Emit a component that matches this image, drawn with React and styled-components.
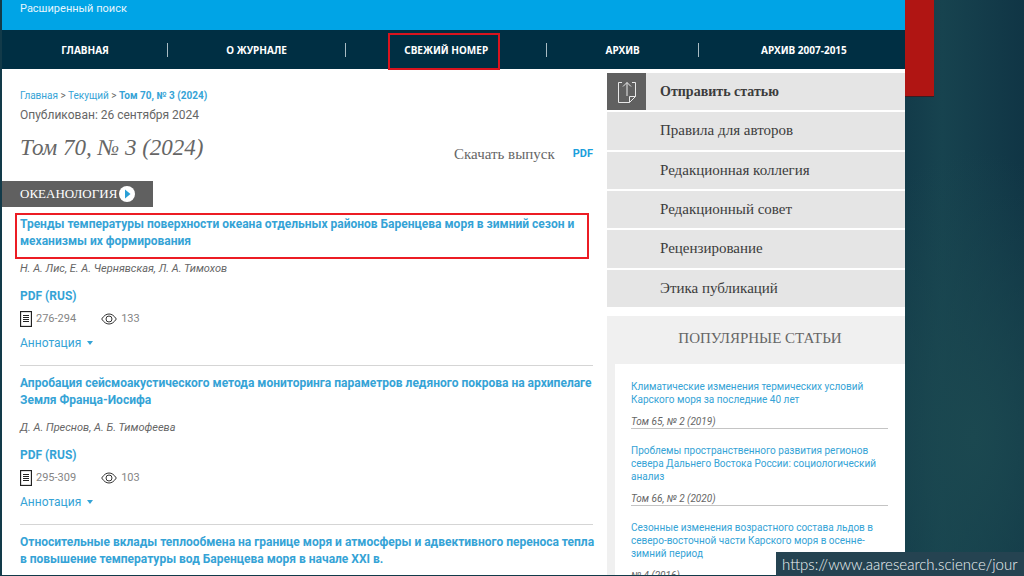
import React from 'react';
import styled, { createGlobalStyle } from 'styled-components';

const GlobalStyle = createGlobalStyle`
  *, *::before, *::after {
    box-sizing: border-box;
  }
  body {
    margin: 0;
    font-family: Roboto, 'Noto Sans', sans-serif;
    font-size: 11px;
    color: #666;
  }
  a {
    color: #35a3d6;
    text-decoration: none;
  }
  h1, h2, h3, p, ul {
    margin: 0;
    padding: 0;
    font-weight: normal;
  }
  ul {
    list-style: none;
  }
`;

const serif = "'Liberation Serif', 'Times New Roman', serif";

const Slide = styled.div`
  position: relative;
  display: flex;
  align-items: stretch;
  height: 100vh;
  overflow: hidden;
  padding: 0 0 1px 2px;
  background:
    radial-gradient(ellipse 16% 50% at 95% 76%, #1b4850 0%, rgba(27, 72, 80, 0) 100%),
    linear-gradient(90deg, #123a49 88%, #17434f 92%, #103545 100%);
`;

const Site = styled.div`
  flex: 1;
  overflow: hidden;
  background: #fff;
`;

const SlideMargin = styled.div`
  flex: 0 0 119px;
`;

const RedTab = styled.div`
  width: 29px;
  height: 97px;
  background: #b01513;
  border-bottom: 1px solid #3a1c22;
`;

const TopBar = styled.div`
  height: 30px;
  padding: 0 18px;
  background: #00a4e6;
  line-height: 18px;

  a {
    color: #e4f5fd;
  }
`;

const Nav = styled.nav`
  display: flex;
  align-items: center;
  height: 39px;
  background: #002f43;
`;

const NavItem = styled.a`
  position: relative;
  flex: 1 1 auto;
  border-left: 1px solid #a9bcc4;
  color: #fff;
  font-family: 'Noto Sans', sans-serif;
  font-size: 10px;
  font-weight: bold;
  line-height: 14px;
  text-align: center;
  white-space: nowrap;

  &:first-child {
    border-left-color: transparent;
  }
  &:last-child {
    padding-left: 4px;
  }
`;

const NavMark = styled.span`
  position: absolute;
  inset: -10px 46px -13px 42px;
  border: 2px solid #d9141e;
`;

const Columns = styled.div`
  display: grid;
  grid-template-columns: minmax(0, 1fr) 33%;
  column-gap: 14px;
`;

const Main = styled.main`
  padding: 18px 0 0 18px;
`;

const Crumbs = styled.nav`
  font-size: 10px;
  line-height: 18px;
`;

const Published = styled.p`
  font-size: 12px;
  line-height: 20px;
`;

const IssueHead = styled.div`
  display: flex;
  align-items: flex-end;
  justify-content: space-between;
  padding-top: 8px;
`;

const IssueTitle = styled.h1`
  font-family: ${serif};
  font-size: 23px;
  font-style: italic;
  line-height: 30px;
`;

const Download = styled.div`
  display: flex;
  align-items: center;
  gap: 18px;
  font-family: ${serif};
  font-size: 15px;
  line-height: 18px;

  a {
    color: #1c9fdc;
    font-family: Roboto, sans-serif;
    font-size: 11px;
    font-weight: bold;
  }
`;

const Section = styled.h2`
  display: inline-flex;
  align-items: center;
  gap: 2px;
  height: 26px;
  margin: 18px 0 0 -18px;
  padding: 0 18px;
  background: #606060;
  color: #fff;
  font-family: ${serif};
  font-size: 13px;
`;

const Article = styled.article`
  padding: 9px 0 12px;
  border-bottom: 1px solid #d5d5d5;
`;

const ArticleTitle = styled.h3`
  position: relative;
  margin-right: -8px;
  font-size: 12px;
  font-weight: bold;
  line-height: 17px;
`;

const TitleMark = styled.span`
  position: absolute;
  inset: -3px 12px -9px -5px;
  border: 2px solid #ec1c24;
  pointer-events: none;
`;

const Authors = styled.p`
  margin-top: 9px;
  font-style: italic;
  line-height: 20px;
`;

const Galley = styled.a`
  display: block;
  margin-top: 7px;
  font-size: 12px;
  font-weight: bold;
  line-height: 20px;
`;

const Meta = styled.div`
  display: flex;
  align-items: center;
  gap: 25px;
  margin-top: 3px;
  color: #858585;
  line-height: 20px;
`;

const MetaItem = styled.span`
  display: flex;
  align-items: center;
  gap: 4px;
`;

const AbstractToggle = styled.button`
  display: flex;
  align-items: center;
  gap: 6px;
  margin-top: 4px;
  padding: 0;
  border: 0;
  background: none;
  color: #35a3d6;
  font-family: inherit;
  font-size: 12px;
  line-height: 20px;

  &::after {
    content: '';
    border: 3px solid transparent;
    border-top: 4px solid #35a3d6;
    border-bottom: 0;
  }
`;

const Sidebar = styled.aside`
  padding-top: 4px;
`;

const Menu = styled.ul`
  display: grid;
  grid-auto-rows: 1fr;
  gap: 2px;
  height: 234px;
`;

const MenuLink = styled.a`
  display: grid;
  grid-template-columns: 39px 1fr;
  align-items: center;
  column-gap: 14px;
  height: 100%;
  background: #e5e5e5;
  color: #3c3c3c;
  font-family: ${serif};
  font-size: ${(p) => (p.$strong ? '14px' : '15px')};
  font-weight: ${(p) => (p.$strong ? 'bold' : 'normal')};
`;

const MenuIcon = styled.span`
  display: grid;
  place-items: center;
  height: 100%;
  background: ${(p) => (p.$filled ? '#606060' : 'transparent')};
`;

const Popular = styled.section`
  margin-top: 9px;
  padding-left: 8px;
  background: #f0f0f0;
`;

const PopularTitle = styled.h2`
  height: 48px;
  font-family: ${serif};
  font-size: 15px;
  line-height: 44px;
  text-align: center;
`;

const PopularList = styled.ul`
  padding: 16px 17px 0 16px;
  background: #fff;
`;

const PopularItem = styled.li`
  margin-bottom: 15px;
  border-bottom: 1px solid #c4c4c4;
  font-size: 10px;
  line-height: 13px;

  p {
    margin-top: 9px;
    font-style: italic;
  }
`;

const Address = styled.a`
  position: absolute;
  right: 0;
  bottom: 0;
  width: 248px;
  padding-left: 6px;
  background: #254351;
  color: #eef3f5;
  font-family: Lato, sans-serif;
  font-size: 15px;
  font-weight: 300;
  line-height: 24px;
  white-space: nowrap;
`;

const UploadIcon = () => (
  <svg width="20" height="24" viewBox="0 0 20 24" fill="none" stroke="#e8e8e8" strokeWidth="1">
    <path d="M5 2.500H1.500v20h11l6-6v-14H15" />
    <path d="M12.500 22.500v-6H18.500" />
    <path d="M10 16V2.500M6 6.500l4-4 4 4" />
  </svg>
);

const PlayIcon = () => (
  <svg width="16" height="16" viewBox="0 0 16 16">
    <circle cx="8" cy="8" r="8" fill="#fff" />
    <path d="M6 3.500l5.500 4.500L6 12.500z" fill="#2a9fd6" />
  </svg>
);

const PagesIcon = () => (
  <svg width="12" height="16" viewBox="0 0 12 16" fill="none" stroke="#222">
    <rect x="0.500" y="0.500" width="11" height="15" strokeWidth="1.300" />
    <path d="M3 4.500h6M3 6.500h6M3 8.500h6M3 10.500h6" />
  </svg>
);

const EyeIcon = () => (
  <svg width="16" height="12" viewBox="0 0 16 12" fill="none" stroke="#333">
    <path d="M0.700 6C3 2.500 5.300 1 8 1s5 1.500 7.300 5C13 9.500 10.700 11 8 11S3 9.500 0.700 6z" />
    <circle cx="8" cy="6" r="3" />
  </svg>
);

const navItems = ['ГЛАВНАЯ', 'О ЖУРНАЛЕ', 'СВЕЖИЙ НОМЕР', 'АРХИВ', 'АРХИВ 2007-2015'];

const menuItems = [
  'Отправить статью',
  'Правила для авторов',
  'Редакционная коллегия',
  'Редакционный совет',
  'Рецензирование',
  'Этика публикаций',
];

const articles = [
  {
    title: 'Тренды температуры поверхности океана отдельных районов Баренцева моря в зимний сезон и механизмы их формирования',
    authors: 'Н. А. Лис, Е. А. Чернявская, Л. А. Тимохов',
    pages: '276-294',
    views: 133,
    marked: true,
  },
  {
    title: 'Апробация сейсмоакустического метода мониторинга параметров ледяного покрова на архипелаге Земля Франца-Иосифа',
    authors: 'Д. А. Преснов, А. Б. Тимофеева',
    pages: '295-309',
    views: 103,
  },
  {
    title: 'Относительные вклады теплообмена на границе моря и атмосферы и адвективного переноса тепла в повышение температуры вод Баренцева моря в начале XXI в.',
  },
];

const popular = [
  { title: 'Климатические изменения термических условий Карского моря за последние 40 лет', issue: 'Том 65, № 2 (2019)' },
  { title: 'Проблемы пространственного развития регионов севера Дальнего Востока России: социологический анализ', issue: 'Том 66, № 2 (2020)' },
  { title: 'Сезонные изменения возрастного состава льдов в северо-восточной части Карского моря в осенне-зимний период', issue: '№ 4 (2016)' },
];

export default function App() {
  return (
    <Slide>
      <GlobalStyle />
      <Site>
        <TopBar>
          <a href="#search">Расширенный поиск</a>
        </TopBar>
        <Nav>
          {navItems.map((item, index) => (
            <NavItem href="#nav" key={item}>
              {item}
              {index === 2 && <NavMark />}
            </NavItem>
          ))}
        </Nav>
        <Columns>
          <Main>
            <Crumbs>
              <a href="#home">Главная</a> &gt; <a href="#current">Текущий</a> &gt;{' '}
              <a href="#issue"><b>Том 70, № 3 (2024)</b></a>
            </Crumbs>
            <Published>Опубликован: 26 сентября 2024</Published>
            <IssueHead>
              <IssueTitle>Том 70, № 3 (2024)</IssueTitle>
              <Download>
                Скачать выпуск <a href="#pdf">PDF</a>
              </Download>
            </IssueHead>
            <Section>
              ОКЕАНОЛОГИЯ <PlayIcon />
            </Section>
            {articles.map((article) => (
              <Article key={article.title}>
                <ArticleTitle>
                  <a href="#article">{article.title}</a>
                  {article.marked && <TitleMark />}
                </ArticleTitle>
                {article.authors && (
                  <>
                    <Authors>{article.authors}</Authors>
                    <Galley href="#galley">PDF (RUS)</Galley>
                    <Meta>
                      <MetaItem><PagesIcon /> {article.pages}</MetaItem>
                      <MetaItem><EyeIcon /> {article.views}</MetaItem>
                    </Meta>
                    <AbstractToggle type="button">Аннотация</AbstractToggle>
                  </>
                )}
              </Article>
            ))}
          </Main>
          <Sidebar>
            <Menu>
              {menuItems.map((item, index) => (
                <li key={item}>
                  <MenuLink href="#menu" $strong={index === 0}>
                    <MenuIcon $filled={index === 0}>{index === 0 && <UploadIcon />}</MenuIcon>
                    {item}
                  </MenuLink>
                </li>
              ))}
            </Menu>
            <Popular>
              <PopularTitle>ПОПУЛЯРНЫЕ СТАТЬИ</PopularTitle>
              <PopularList>
                {popular.map((item) => (
                  <PopularItem key={item.title}>
                    <a href="#popular">{item.title}</a>
                    <p>{item.issue}</p>
                  </PopularItem>
                ))}
              </PopularList>
            </Popular>
          </Sidebar>
        </Columns>
      </Site>
      <SlideMargin>
        <RedTab />
      </SlideMargin>
      <Address href="#address">https://www.aaresearch.science/jour</Address>
    </Slide>
  );
}
